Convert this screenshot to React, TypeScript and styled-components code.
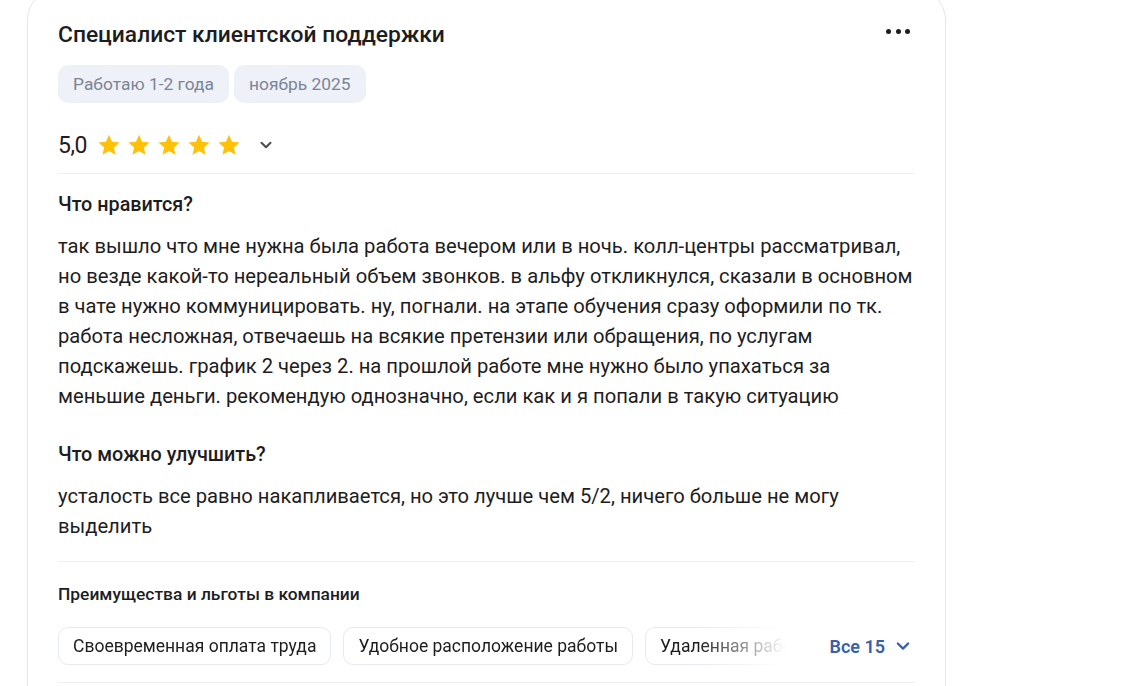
import React from 'react'
import styled, { createGlobalStyle } from 'styled-components'

const GlobalStyle = createGlobalStyle`
  html, body {
    margin: 0;
    padding: 0;
    background: #ffffff;
    overflow: hidden;
  }
  body {
    font-family: Roboto, "Liberation Sans", Arial, sans-serif;
    color: #1d1d1f;
  }
`

const Page = styled.div`
  padding-left: 27px;
`

const Card = styled.div`
  width: 919px;
  box-sizing: border-box;
  margin-top: -12px;
  padding: 30px 30px 0 30px;
  border: 1px solid #e2e6ee;
  border-radius: 32px;
  background: #ffffff;
`

const Header = styled.div`
  display: flex;
  justify-content: space-between;
  align-items: center;
`

const Title = styled.h2`
  margin: 0;
  font-size: 22.8px;
  line-height: 32px;
  font-weight: 500;
  color: #1d1d1f;
`

const MoreButton = styled.button`
  display: flex;
  gap: 4.5px;
  align-items: center;
  padding: 0;
  margin-right: 5px;
  margin-top: -7px;
  border: none;
  background: none;
  cursor: pointer;
`

const Dot = styled.span`
  width: 5px;
  height: 5px;
  border-radius: 50%;
  background: #1d1d1f;
`

const Tags = styled.div`
  display: flex;
  gap: 5px;
  margin-top: 14px;
`

const Tag = styled.span`
  display: inline-flex;
  align-items: center;
  height: 38px;
  padding: 0 15px;
  border-radius: 10px;
  background: #eef1f8;
  color: #7b8597;
  font-size: 17.4px;
`

const RatingRow = styled.div`
  display: flex;
  align-items: center;
  height: 32px;
  margin-top: 26px;
  padding-bottom: 12px;
  border-bottom: 1px solid #eef0f5;
`

const Score = styled.span`
  font-size: 23px;
  font-weight: 400;
  margin-right: 10px;
  letter-spacing: -0.5px;
`

const Stars = styled.div`
  display: flex;
  gap: 6px;
`

const Chevron = styled.svg<{ $color?: string }>`
  flex: none;
  color: ${p => p.$color || '#4a4a4a'};
`

const Spacer = styled.span<{ $w: number }>`
  width: ${p => p.$w}px;
`

const Section = styled.div<{ $top: number }>`
  margin-top: ${p => p.$top}px;
`

const Question = styled.h3`
  margin: 0;
  font-size: 19.8px;
  line-height: 28px;
  font-weight: 500;
`

const Answer = styled.p`
  margin: 12px 0 0 0;
  font-size: 20.2px;
  line-height: 30px;
  color: #1d1d1f;
`

const Benefits = styled.div`
  margin-top: 20px;
  padding-top: 20px;
  padding-bottom: 17px;
  border-top: 1px solid #eef0f5;
  border-bottom: 1px solid #eef0f5;
`

const BenefitsTitle = styled.h4`
  margin: 0;
  font-size: 17.4px;
  line-height: 24px;
  font-weight: 500;
`

const ChipRow = styled.div`
  display: flex;
  align-items: center;
  margin-top: 21px;
`

const ChipTrack = styled.div`
  display: flex;
  gap: 12px;
  width: 730px;
  overflow: hidden;
  -webkit-mask-image: linear-gradient(to right, #000 640px, transparent 728px);
  mask-image: linear-gradient(to right, #000 640px, transparent 728px);
`

const Chip = styled.span`
  flex: none;
  display: inline-flex;
  align-items: center;
  height: 38px;
  padding: 0 14px;
  border: 1px solid #e6e9ef;
  border-radius: 10px;
  font-size: 17.5px;
  color: #1d1d1f;
  box-sizing: border-box;
`

const AllButton = styled.button`
  display: flex;
  align-items: center;
  gap: 10px;
  margin-left: auto;
  margin-right: 4px;
  padding: 0;
  border: none;
  background: none;
  color: #3a5ea8;
  font-family: inherit;
  font-size: 18px;
  font-weight: 600;
  cursor: pointer;
`

// the card goes on below the fold
const CardBottom = styled.div`
  height: 60px;
`

const Star = () => (
  <svg width="24" height="24" viewBox="0 0 24 24">
    <path
      fill="#ffc107"
      d="M12 1.8l3.05 6.9 7.5.7-5.67 5 1.67 7.4L12 17.9l-6.55 3.9 1.67-7.4-5.67-5 7.5-.7z"
    />
  </svg>
)

const ChevronDown = ({ color, size = 14 }: { color?: string; size?: number }) => (
  <Chevron $color={color} width={size} height={size} viewBox="0 0 14 14">
    <path
      d="M2.5 4.8L7 9.3l4.5-4.5"
      fill="none"
      stroke="currentColor"
      strokeWidth="2"
      strokeLinecap="round"
      strokeLinejoin="round"
    />
  </Chevron>
)

const benefits = [
  'Своевременная оплата труда',
  'Удобное расположение работы',
  'Удаленная работа',
]

export default function App() {
  return (
    <>
      <GlobalStyle />
      <Page>
        <Card>
          <Header>
            <Title>Специалист клиентской поддержки</Title>
            <MoreButton aria-label="Ещё">
              <Dot />
              <Dot />
              <Dot />
            </MoreButton>
          </Header>
          <Tags>
            <Tag>Работаю 1-2 года</Tag>
            <Tag>ноябрь 2025</Tag>
          </Tags>
          <RatingRow>
            <Score>5,0</Score>
            <Stars>
              {[0, 1, 2, 3, 4].map(i => (
                <Star key={i} />
              ))}
            </Stars>
            <Spacer $w={18} />
            <ChevronDown />
          </RatingRow>
          <Section $top={17}>
            <Question>Что нравится?</Question>
            <Answer>
              так вышло что мне нужна была работа вечером или в ночь. колл-центры рассматривал,
              но везде какой-то нереальный объем звонков. в альфу откликнулся, сказали в основном
              в чате нужно коммуницировать. ну, погнали. на этапе обучения сразу оформили по тк.
              работа несложная, отвечаешь на всякие претензии или обращения, по услугам
              подскажешь. график 2 через 2. на прошлой работе мне нужно было упахаться за
              меньшие деньги. рекомендую однозначно, если как и я попали в такую ситуацию
            </Answer>
          </Section>
          <Section $top={30}>
            <Question>Что можно улучшить?</Question>
            <Answer>
              усталость все равно накапливается, но это лучше чем 5/2, ничего больше не могу
              выделить
            </Answer>
          </Section>
          <Benefits>
            <BenefitsTitle>Преимущества и льготы в компании</BenefitsTitle>
            <ChipRow>
              <ChipTrack>
                {benefits.map(b => (
                  <Chip key={b}>{b}</Chip>
                ))}
              </ChipTrack>
              <AllButton>
                Все 15
                <ChevronDown color="#3a5ea8" size={16} />
              </AllButton>
            </ChipRow>
          </Benefits>
          <CardBottom />
        </Card>
      </Page>
    </>
  )
}
